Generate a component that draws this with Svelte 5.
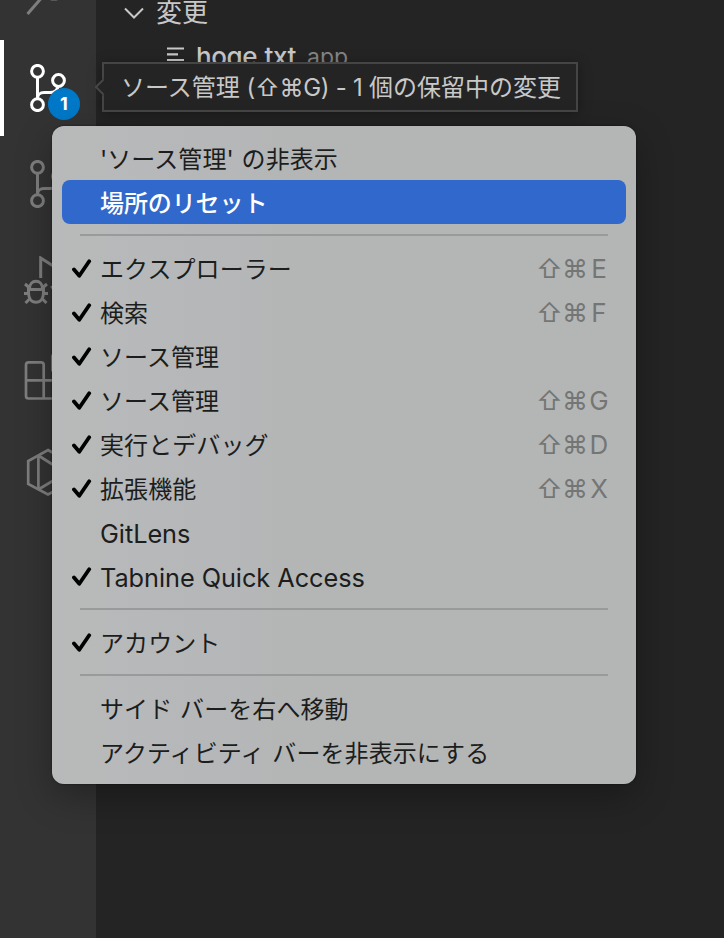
<script lang="ts">
    type Item = { label: string; checked?: boolean; key?: string; active?: boolean; latin?: boolean };

    const groups: Item[][] = [
        [
            { label: "'ソース管理' の非表示" },
            { label: "場所のリセット", active: true },
        ],
        [
            { label: "エクスプローラー", checked: true, key: "E" },
            { label: "検索", checked: true, key: "F" },
            { label: "ソース管理", checked: true },
            { label: "ソース管理", checked: true, key: "G" },
            { label: "実行とデバッグ", checked: true, key: "D" },
            { label: "拡張機能", checked: true, key: "X" },
            { label: "GitLens", latin: true },
            { label: "Tabnine Quick Access", checked: true, latin: true },
        ],
        [{ label: "アカウント", checked: true }],
        [
            { label: "サイド バーを右へ移動" },
            { label: "アクティビティ バーを非表示にする" },
        ],
    ];
</script>

{#snippet branches()}
    <svg viewBox="0 0 48 48">
        <circle cx="13.5" cy="7.3" r="5.9" />
        <circle cx="13.5" cy="40.7" r="5.9" />
        <circle cx="34.5" cy="16.5" r="5.9" />
        <path d="M13.5 13.5V34.5C13.5 31 16 28.6 20 28.6H26C31 28.6 33.5 26.5 34 22.5" />
    </svg>
{/snippet}

<div class="window">
    <nav class="activity-bar">
        <div class="action">
            <svg viewBox="0 0 48 48">
                <circle cx="30" cy="16.5" r="14.5" />
                <path d="M3.5 46L20 27" />
            </svg>
        </div>
        <div class="action current">
            {@render branches()}
            <span class="badge">1</span>
        </div>
        <div class="action">
            {@render branches()}
        </div>
        <div class="action">
            <svg viewBox="0 0 48 48">
                <path d="M16.7 22V2L45 20L27 32" />
                <path d="M4.5 33.5V36.5C4.5 42.5 7.5 46.2 12 46.2S19.5 42.5 19.5 36.5V33.5ZM5.5 33C5.5 28 8.5 25.3 12 25.3S18.5 28 18.5 33" />
                <path d="M0 37.5H4.5M19.5 37.5H24M1 28L5.7 32M23 28L18.3 32M1.5 47L6 42.5M22.5 47L18 42.5" />
            </svg>
        </div>
        <div class="action">
            <svg viewBox="0 0 48 48" class="thin">
                <path d="M2 28.3V13Q2 10.3 4.7 10.3H17Q19.7 10.3 19.7 13V28.3M2 28.3H35.5Q38 28.3 38 31V44Q38 46.5 35.5 46.5H4.5Q2 46.5 2 44V28.3M19.7 28.3V46.5" />
                <rect x="28.3" y="2.5" width="17" height="17" rx="2" />
            </svg>
        </div>
        <div class="action">
            <svg viewBox="0 0 48 48" class="thin">
                <path d="M24 2L43.5 13V36L24 46.5L4.2 36V13Z" />
                <path d="M14.4 7.5V41.5M14.4 7.5L43.5 26M14.4 41.5L43.5 24" />
            </svg>
        </div>
    </nav>

    <main class="side-bar">
        <div class="row section">
            <svg class="chevron" viewBox="0 0 20 12"><path d="M1 1.5L10 10.5L19 1.5" /></svg>
            <span>変更</span>
        </div>
        <div class="row file">
            <svg class="lines" viewBox="0 0 17 18"><path d="M0 3.5H17M0 9.3H11M0 15H17" /></svg>
            <span class="name">hoge.txt</span>
            <span class="folder">app</span>
        </div>
    </main>

    <div class="tooltip">ソース管理 <span class="hint">(⇧⌘G) - 1</span> 個の保留中の変更</div>

    <div class="menu">
        {#each groups as group}
            <ul>
                {#each group as item}
                    <li class:active={item.active}>
                        <span class="mark">
                            {#if item.checked}
                                <svg viewBox="0 0 20 20"><path d="M2 10.5L7.3 16.8L17.2 2.3" /></svg>
                            {/if}
                        </span>
                        <span class="label" class:latin={item.latin}>{item.label}</span>
                        {#if item.key}
                            <span class="keys"><kbd>⇧</kbd><kbd>⌘</kbd><kbd class="letter">{item.key}</kbd></span>
                        {/if}
                    </li>
                {/each}
            </ul>
        {/each}
    </div>
</div>

<style>
    :global(body) {
        margin: 0;
        background: #242424;
    }

    .window {
        position: relative;
        display: flex;
        width: 724px;
        height: 938px;
        overflow: hidden;
        font-family: Inter, "Noto Sans CJK JP", sans-serif;
        font-size: 24px;
        white-space: nowrap;
    }

    svg {
        display: block;
        fill: none;
        stroke: currentColor;
    }

    .activity-bar {
        display: flex;
        flex-direction: column;
        flex: none;
        width: 96px;
        margin-top: -56px;
        background: #333;
    }

    .action {
        position: relative;
        box-sizing: border-box;
        flex: none;
        height: 96px;
        padding: 24px 20px;
        border-left: 4px solid transparent;
        color: #7e7e7e;
    }

    .action svg {
        width: 48px;
        height: 48px;
        stroke-width: 3;
    }

    .action svg.thin {
        stroke-width: 2.7;
    }

    .action.current {
        border-left-color: #fff;
        color: #fff;
    }

    .badge {
        position: absolute;
        left: 44px;
        top: 48px;
        width: 32px;
        height: 32px;
        border-radius: 50%;
        background: #0078c8;
        font-size: 18px;
        font-weight: 700;
        line-height: 32px;
        text-align: center;
    }

    .side-bar {
        flex: 1;
        background: #242424;
        color: #c8c8c8;
    }

    .row {
        display: flex;
        align-items: center;
        height: 44px;
        font-size: 26px;
    }

    .section {
        gap: 12px;
        height: 26px;
        margin-bottom: 7px;
        padding-left: 28px;
        line-height: 26px;
    }

    .chevron {
        width: 20px;
        height: 12px;
        stroke-width: 2;
    }

    .file {
        padding-left: 71px;
    }

    .lines {
        width: 17px;
        height: 18px;
        margin-bottom: 2px;
        stroke-width: 2.2;
    }

    .name {
        margin: 2px 11px 0 12px;
        font-weight: 500;
        letter-spacing: -.4px;
    }

    .folder {
        padding-top: 4px;
        color: #868686;
        font-size: 23px;
    }

    .tooltip {
        position: absolute;
        left: 102px;
        top: 62px;
        box-sizing: border-box;
        width: 476px;
        height: 50px;
        padding-left: 17px;
        border: 2px solid #454545;
        background: #242424;
        box-shadow: 0 2px 12px rgba(0, 0, 0, .35);
        color: #c8c8c8;
        line-height: 47px;
    }

    .hint {
        letter-spacing: -.3px;
    }

    .tooltip::before {
        content: "";
        position: absolute;
        left: -7px;
        top: 17px;
        width: 10px;
        height: 10px;
        border-left: 2px solid #454545;
        border-bottom: 2px solid #454545;
        background: #242424;
        transform: rotate(45deg);
    }

    .menu {
        position: absolute;
        left: 52px;
        top: 126px;
        box-sizing: border-box;
        width: 584px;
        padding: 10px;
        border-radius: 12px;
        background: linear-gradient(90deg, #b8baba, #b5b7b9 25%, #b4b6b5 45%);
        box-shadow: 0 0 2px rgba(0, 0, 0, .6), 0 12px 36px rgba(0, 0, 0, .3);
        color: #1c1d1d;
    }

    ul {
        margin: 0;
        padding: 0;
        list-style: none;
    }

    ul + ul::before {
        content: "";
        display: block;
        height: 2px;
        margin: 10px 18px;
        background: #999b9a;
    }

    li {
        display: flex;
        align-items: center;
        height: 44px;
        border-radius: 8px;
    }

    li.active {
        background: #3068cb;
        color: #fff;
    }

    .mark {
        width: 28px;
        margin: 2px 0 0 10px;
        color: #000;
    }

    .mark svg {
        width: 20px;
        height: 20px;
        stroke-width: 3.8;
        stroke-linecap: round;
        stroke-linejoin: round;
    }

    .label {
        flex: 1;
        padding-bottom: 2px;
        letter-spacing: .08px;
        word-spacing: 1px;
    }

    .label.latin {
        padding: 2px 0 0;
        font-size: 25.3px;
        letter-spacing: -.05px;
        word-spacing: 0;
    }

    .active .label {
        font-weight: 500;
        letter-spacing: -.1px;
    }

    .keys {
        display: flex;
        width: 90px;
        color: #747675;
    }

    kbd {
        width: 26px;
        font-family: Inter, "DejaVu Sans", sans-serif;
        font-size: 26px;
        text-align: center;
    }

    kbd.letter {
        width: 22px;
    }
</style>
